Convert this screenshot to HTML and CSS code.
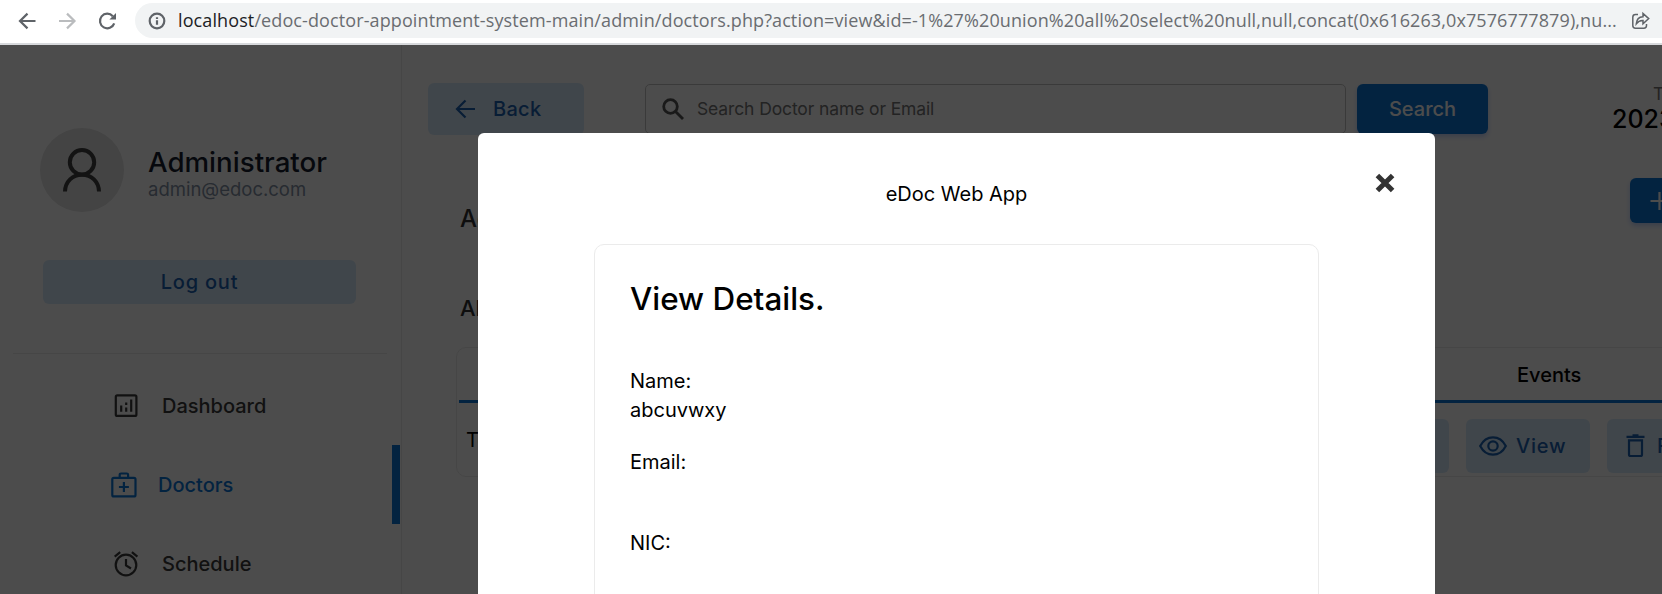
FILE: index.html
```html
<!DOCTYPE html>
<html lang="en">
<head>
<meta charset="utf-8">
<title>Doctors</title>
<link rel="stylesheet" href="styles.css">
</head>
<body>
<header class="browser">
  <svg class="nav-icon" viewBox="0 0 20 20"><path d="M18.500 10H3M10.500 2.600 3 10l7.500 7.400"/></svg>
  <svg class="nav-icon disabled" viewBox="0 0 20 20"><path d="M2 10h15.500M10 2.600l7.500 7.400-7.500 7.400"/></svg>
  <svg class="nav-icon" viewBox="0 0 20 20"><path d="M17.200 12.300A7.300 7.300 0 1 1 15.800 5.200"/><path class="solid" d="M19 2v6.600h-6.600z"/></svg>
  <div class="omnibox">
    <svg class="info" viewBox="0 0 18 18"><circle cx="9" cy="9" r="7.300"/><path d="M9 8.200v4.600M9 5.200v1.700"/></svg>
    <div class="url"><span class="host">localhost</span>/edoc-doctor-appointment-system-main/admin/doctors.php?action=view&amp;id=-1%27%20union%20all%20select%20null,null,concat(0x616263,0x7576777879),nu...</div>
    <svg class="share" viewBox="0 0 20 18"><path d="M7 2.500H4.500a2.700 2.700 0 0 0-2.700 2.700v8.300a2.700 2.700 0 0 0 2.700 2.700h8.300a2.700 2.700 0 0 0 2.700-2.700V12"/><path d="M5.300 11.800C5.600 7.500 8 5 12 4.800V1.500l5.700 5.100-5.700 5.100V8.500C9 8.300 7 9.500 5.300 11.800z"/></svg>
  </div>
</header>
<div class="viewport">
  <aside class="menu">
    <div class="profile">
      <div class="avatar"><svg viewBox="0 0 38 44"><circle cx="19" cy="14.300" r="12.200"/><path d="M2 43.500C2.300 33.500 9.500 26.700 19 26.700S35.700 33.500 36 43.500"/></svg></div>
      <div class="who"><div class="profile-name">Administrator</div><div class="profile-mail">admin@edoc.com</div></div>
    </div>
    <button class="soft logout">Log out</button>
    <hr>
    <nav>
      <a class="item"><svg viewBox="0 0 26 26"><rect x="2.800" y="2.300" width="20.600" height="20.600" rx="1.500"/><path d="M8.200 12.500v6.300M13.200 9.500v2.400M13.200 14.600v4.200M18.200 6.500v12.300"/></svg>Dashboard</a>
      <a class="item active"><svg viewBox="0 0 26 26"><rect x="1.300" y="5.800" width="23.200" height="18.600" rx="1.500"/><path d="M8.700 5.500V2.800q0-1.300 1.300-1.300h5.800q1.300 0 1.300 1.300v2.700M12.900 10v10M7.900 15h10"/></svg>Doctors</a>
      <a class="item"><svg viewBox="0 0 26 26"><circle cx="13" cy="14" r="10.300"/><path d="M13 8v6.500l5 3M1.700 5.600l5.500-4.400M24.400 5.600l-5.500-4.400"/></svg>Schedule</a>
    </nav>
  </aside>
  <main class="content">
    <div class="toolbar">
      <button class="soft back"><svg viewBox="0 0 20 20"><path d="M20 10H2.500M10.500 1.500 2 10l8.500 8.500"/></svg>Back</button>
      <div class="search"><svg viewBox="0 0 22 22"><circle cx="8.500" cy="8.500" r="6.800"/><path d="M13.500 13.500l7.500 7.500"/></svg>Search Doctor name or Email</div>
      <button class="primary find">Search</button>
      <div class="today"><div class="today-label">Today's Date</div><div class="today-date">2023-03-04</div></div>
    </div>
    <div class="add-row"><h2>Add New Doctor</h2><button class="primary add"><svg viewBox="0 0 20 20"><path d="M9.500 1v18M.5 10h18"/></svg>Add New</button></div>
    <h3>All Doctors (1)</h3>
    <div class="table">
      <div class="table-head">Events</div>
      <div class="table-row"><div class="doctor">Test Doctor</div>
        <div class="soft act edit"></div>
        <div class="soft act view"><svg viewBox="0 0 28 20"><path d="M1.200 10C4 4.500 8.500 1.300 14 1.300S24 4.500 26.800 10C24 15.500 19.500 18.700 14 18.700S4 15.500 1.200 10z"/><circle cx="14" cy="10" r="4.700"/></svg>View</div>
        <div class="soft act remove"><svg viewBox="0 0 20 24"><path d="M3 7v13.500q0 1.500 1.500 1.500h10q1.500 0 1.500-1.500V6.300H3zM.5 2.800h18M6.500 1.300h6"/></svg>Remove</div>
      </div>
    </div>
  </main>
  <div class="overlay">
    <section class="popup">
      <a class="close"><svg viewBox="0 0 20 20"><path d="M2.400 2.400l15.200 15.200M17.600 2.400 2.400 17.600"/></svg></a>
      <div class="popup-title">eDoc Web App</div>
      <div class="details">
        <h1>View Details.</h1>
        <dl>
          <dt>Name:</dt><dd>abcuvwxy</dd>
          <dt>Email:</dt><dd></dd>
          <dt>NIC:</dt><dd></dd>
        </dl>
      </div>
    </section>
  </div>
</div>
</body>
</html>
```

FILE: styles.css
```css
* { box-sizing: border-box; }
html, body { margin: 0; height: 594px; overflow: hidden; }
body { font-family: Inter, sans-serif; font-size: 20px; color: #000; background: #fff; }
svg { display: block; fill: none; stroke: currentColor; stroke-width: 2.200; flex: none; overflow: visible; }
button { font: inherit; border: 0; margin: 0; }
h1, h2, h3, dl, dd { margin: 0; font-weight: 500; }

.browser { height: 45px; padding: 3px 0 5px 17px; border-bottom: 2px solid #d7d9dc; display: flex; align-items: flex-start; color: #5f6368; }
.nav-icon { width: 20px; height: 20px; margin: 8px 20px 0 0; }
.nav-icon.disabled { color: #babcbe; }
.nav-icon + .omnibox { margin-left: -2px; }
.solid { fill: currentColor; stroke: none; }
.omnibox { flex: 1; height: 35px; border-radius: 18px 0 0 18px; background: #f1f3f4; display: flex; align-items: center; padding-left: 13px; }
.info { width: 18px; height: 18px; }
.url { flex: none; width: 1440px; margin-left: 12px; padding-bottom: 2px; font-family: "Open Sans", sans-serif; font-size: 18px; line-height: 32px; letter-spacing: .107px; white-space: nowrap; color: #6a6d71; }
.host { color: #202124; }
.share { width: 20px; height: 18px; margin-left: 13px; stroke-width: 1.500; }

.viewport { position: relative; height: 549px; display: flex; overflow: hidden; }
.menu { width: 402px; flex: none; border-right: 1px solid #ebebeb; }
.profile { display: flex; align-items: center; height: 84px; margin: 83px 0 0 40px; gap: 24px; }
.avatar { width: 84px; height: 84px; border-radius: 50%; background: #e3e3e3; display: grid; place-items: center; color: #404040; }
.avatar svg { width: 38px; height: 44px; stroke-width: 4; }
.who { padding-top: 7px; }
.profile-name { font-size: 27.700px; line-height: 32px; font-weight: 500; color: #161c2d; }
.profile-mail { font-size: 18.500px; line-height: 23px; color: #8492a6; }
.soft { background: #d8ebfa; color: #1b62b3; border-radius: 6px; font-weight: 500; letter-spacing: .8px; }
.primary { background: #0a76d8; color: #fff; border-radius: 6px; box-shadow: 0 3px 5px rgba(57,108,240,.3); }
.logout { display: block; width: 313px; height: 44px; margin: 48px 0 0 43px; padding-bottom: 2px; }
hr { width: 374px; height: 1px; margin: 49px 0 12px 13px; border: 0; background: #ebebeb; }
.item { display: flex; align-items: center; height: 79px; padding-left: 113px; gap: 23px; font-weight: 500; color: #3b3b3b; }
.item svg { width: 26px; height: 26px; }
.item.active { width: 400px; border-right: 8px solid #0a76d8; color: #0a76d8; padding-left: 111px; gap: 21px; }

.content { width: 1400px; flex: none; padding: 38px 0 0 26px; }
.toolbar { display: flex; align-items: flex-start; height: 52px; }
.toolbar > * { flex: none; }
.back { width: 156px; height: 52px; display: flex; align-items: center; padding: 0 0 0 27px; gap: 18px; letter-spacing: .3px; }
.back svg { width: 20px; height: 20px; }
.search { width: 701px; height: 50px; margin: 1px 0 0 61px; border: 1px solid #c4c4c4; border-radius: 5px; display: flex; align-items: center; padding: 0 0 1px 16px; gap: 13px; font-size: 17.500px; letter-spacing: -.12px; color: #757575; }
.search svg { width: 22px; height: 22px; stroke-width: 2.800; color: #555; }
.find { width: 131px; height: 50px; margin: 1px 0 0 11px; font-weight: 500; letter-spacing: 0; }
.today { width: 160px; margin-left: 124px; white-space: nowrap; }
.today-label { font-size: 17.500px; line-height: 22px; padding-left: 41px; color: #777; }
.today-date { font-size: 25px; line-height: 28px; font-weight: 500; }
.add-row { display: flex; align-items: center; height: 45px; margin-top: 43px; padding-left: 32px; color: #313131; }
.add-row > * { flex: none; }
h2 { width: 1170px; font-size: 24px; line-height: 30px; padding-top: 36px; }
.add { width: 190px; height: 45px; display: flex; align-items: center; gap: 12px; padding-left: 20px; }
.add svg { width: 20px; height: 20px; }
h3 { margin: 71px 0 0 32px; font-size: 22px; line-height: 28px; color: #313131; }
.table { width: 1300px; height: 130px; margin: 25px 0 0 28px; border: 1px solid #ebebeb; border-radius: 10px; padding: 0 2px; }
.table-head { height: 55px; border-bottom: 3px solid #0a76d8; padding-left: 1058px; line-height: 54px; font-weight: 500; }
.table-row { display: flex; padding-top: 16px; }
.table-row > * { flex: none; }
.doctor { width: 840px; padding-left: 7px; line-height: 42px; }
.act { height: 54px; width: 124px; margin-right: 17px; display: flex; align-items: center; padding-left: 13px; gap: 9px; }
.act svg { width: 28px; height: 20px; }
.edit { margin-left: 26px; }
.remove { width: 150px; padding-left: 19px; gap: 11px; }
.remove svg { width: 20px; height: 24px; }

.overlay { position: absolute; inset: 0; background: rgba(0,0,0,.7); }
.popup { position: relative; width: 957px; height: 700px; margin: 88px 0 0 478px; padding-top: 46px; background: #fff; border-radius: 6px; }
.close { position: absolute; right: 40px; top: 40px; color: #333; }
.close svg { width: 20px; height: 20px; stroke-width: 5; }
.popup-title { text-align: center; line-height: 30px; }
.details { width: 725px; height: 600px; margin: 35px 0 0 116px; padding: 35px 0 0 35px; border: 1px solid #ebebeb; border-radius: 10px; }
h1 { font-size: 31.400px; line-height: 38px; }
dl { padding-top: 49px; line-height: 29px; font-weight: 400; }
dd { height: 52px; font-weight: 400; }
```
